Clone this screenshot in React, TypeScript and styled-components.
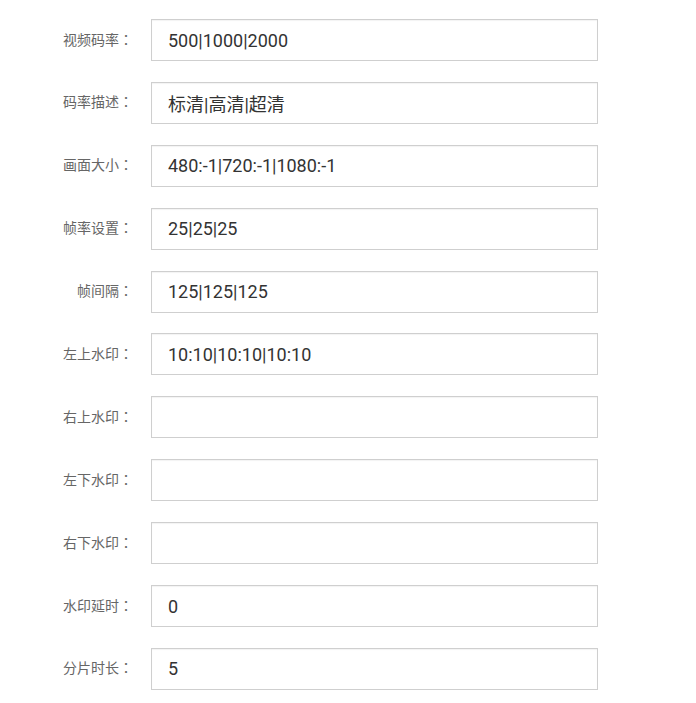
import React from "react";
import styled, { createGlobalStyle } from "styled-components";

const Global = createGlobalStyle`
  html, body { margin: 0; padding: 0; background: #fff; }
  body { font-family: "Noto Sans CJK SC", "Noto Sans", sans-serif; }
`;

const Form = styled.form`
  display: flex;
  flex-direction: column;
  gap: 20.9px;
  padding-top: 19px;
`;

const Row = styled.div`
  display: flex;
  align-items: center;
  gap: 18px;
`;

const Label = styled.label`
  width: 133px;
  text-align: right;
  font-size: 14px;
  color: #666;
  line-height: 20px;
  margin-top: -3px;
  white-space: nowrap;
`;

const Colon = styled.span`
  font-family: "Noto Sans CJK TC", "Noto Sans CJK SC", sans-serif;
`;

const Input = styled.input`
  box-sizing: border-box;
  width: 447px;
  height: 42px;
  border: 1px solid #cfcfcf;
  box-shadow: inset 0 1px 1px rgba(0, 0, 0, 0.05);
  padding: 0 16px;
  font-family: Roboto, "Noto Sans CJK SC", sans-serif;
  font-size: 18px;
  color: #333;
  outline: none;
  background: #fff;
`;

const fields: [string, string][] = [
  ["视频码率", "500|1000|2000"],
  ["码率描述", "标清|高清|超清"],
  ["画面大小", "480:-1|720:-1|1080:-1"],
  ["帧率设置", "25|25|25"],
  ["帧间隔", "125|125|125"],
  ["左上水印", "10:10|10:10|10:10"],
  ["右上水印", ""],
  ["左下水印", ""],
  ["右下水印", ""],
  ["水印延时", "0"],
  ["分片时长", "5"],
];

export default function App() {
  return (
    <>
      <Global />
      <Form>
        {fields.map(([label, value]) => (
          <Row key={label}>
            <Label>
              {label}
              <Colon>：</Colon>
            </Label>
            <Input defaultValue={value} />
          </Row>
        ))}
      </Form>
    </>
  );
}
